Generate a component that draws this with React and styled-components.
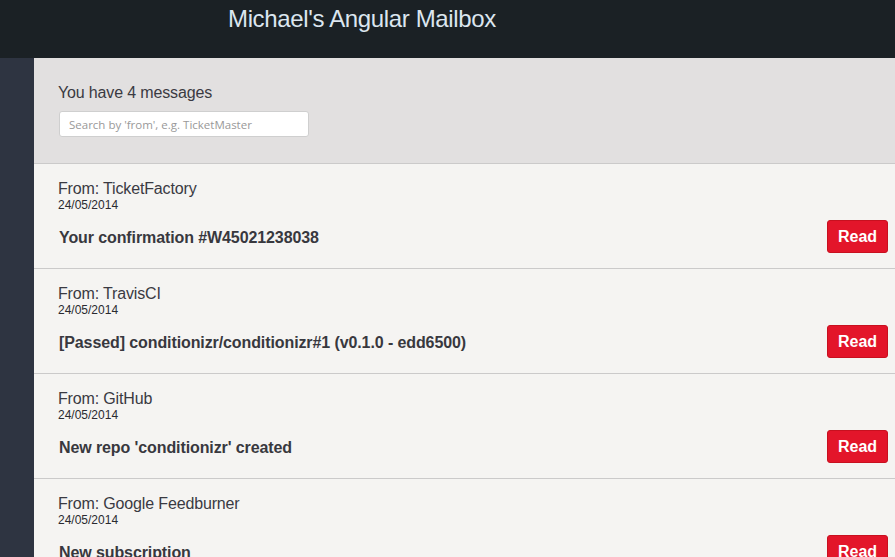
import React from 'react'
import styled, { createGlobalStyle } from 'styled-components'

const Global = createGlobalStyle`
  html, body {
    margin: 0;
    padding: 0;
    height: 100%;
    overflow: hidden;
    background: #f5f4f2;
    font-family: "Liberation Sans", Arial, sans-serif;
  }
`;

const Page = styled.div`
  display: flex;
  flex-direction: column;
  height: 557px;
`;

const Header = styled.header`
  height: 58px;
  flex-shrink: 0;
  background-color: #1b2125;
  display: flex;
  align-items: flex-start;
`;

const Title = styled.h1`
  margin: 6px 0 0 228px;
  font-size: 24px;
  line-height: 26px;
  font-weight: normal;
  color: #dce6ef;
  letter-spacing: -0.35px;
`;

const Body = styled.div`
  flex: 1;
  display: flex;
  min-height: 0;
`;

const Sidebar = styled.aside`
  width: 34px;
  flex-shrink: 0;
  background-color: #2e3441;
`;

const Main = styled.main`
  flex: 1;
  background: #f5f4f2;
  overflow: hidden;
`;

const Toolbar = styled.div`
  background-color: #e2e0e0;
  padding: 25px 24px 26px;
  border-bottom: 1px solid #cbcaca;
`;

const Count = styled.div`
  font-size: 16px;
  line-height: 20px;
  color: #3a3a42;
  letter-spacing: -0.15px;
`;

const Search = styled.input`
  display: block;
  margin: 8px 0 0 1px;
  box-sizing: border-box;
  width: 250px;
  height: 26px;
  padding: 0 9px;
  border: 1px solid #cfcfcf;
  border-radius: 3px;
  background: #fff;
  font-family: "Open Sans", "Liberation Sans", sans-serif;
  font-size: 11.5px;
  color: #333;
  outline: none;
  &::placeholder {
    color: #999;
  }
`;

const Row = styled.div`
  padding: 15px 7px 15px 24px;
  border-bottom: 1px solid #cbcaca;
  background: #f5f4f2;
`;

const From = styled.div`
  font-size: 16px;
  line-height: 20px;
  color: #3a3a42;
  letter-spacing: -0.15px;
`;

const Date = styled.div`
  font-size: 12px;
  line-height: 12px;
  color: #2a2a30;
`;

const SubjectLine = styled.div`
  margin-top: 9px;
  display: flex;
  align-items: center;
  justify-content: space-between;
`;

const Subject = styled.div`
  font-size: 16px;
  font-weight: bold;
  color: #38383e;
  padding: 2px 0 0 1px;
  letter-spacing: -0.1px;
`;

const ReadButton = styled.button`
  width: 61px;
  height: 33px;
  border: 1px solid #c8101f;
  border-radius: 3px;
  background-color: #e3152a;
  color: #fff;
  font-family: "Liberation Sans", Arial, sans-serif;
  font-size: 16px;
  font-weight: bold;
  padding: 0;
  cursor: pointer;
`;

const messages = [
  { from: 'TicketFactory', date: '24/05/2014', subject: 'Your confirmation #W45021238038' },
  { from: 'TravisCI', date: '24/05/2014', subject: '[Passed] conditionizr/conditionizr#1 (v0.1.0 - edd6500)' },
  { from: 'GitHub', date: '24/05/2014', subject: "New repo 'conditionizr' created" },
  { from: 'Google Feedburner', date: '24/05/2014', subject: 'New subscription' },
];

const App = () => {
  return (
    <Page>
      <Global />
      <Header>
        <Title>Michael's Angular Mailbox</Title>
      </Header>
      <Body>
        <Sidebar />
        <Main>
          <Toolbar>
            <Count>You have {messages.length} messages</Count>
            <Search placeholder="Search by 'from', e.g. TicketMaster" />
          </Toolbar>
          {messages.map((m) => (
            <Row key={m.from}>
              <From>From: {m.from}</From>
              <Date>{m.date}</Date>
              <SubjectLine>
                <Subject>{m.subject}</Subject>
                <ReadButton>Read</ReadButton>
              </SubjectLine>
            </Row>
          ))}
        </Main>
      </Body>
    </Page>
  )
}

export default App
